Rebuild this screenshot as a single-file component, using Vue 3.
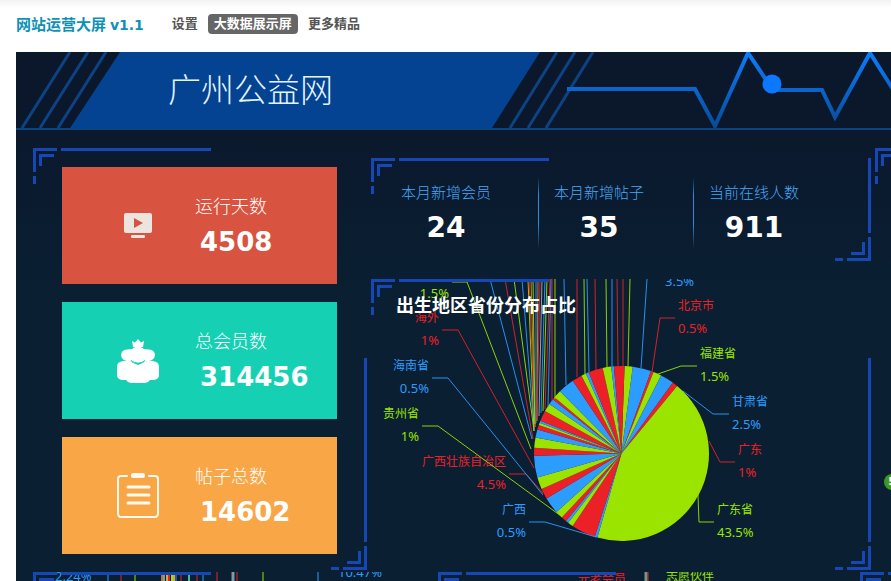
<template>
  <div class="page">
    <nav class="topbar">
      <a class="brand" href="#">网站运营大屏 <span class="brand_version">v1.1</span></a>
      <a v-for="item in menu" :key="item" href="#" :class="['menu_item', item === current ? 'menu_item_active' : '']">{{ item }}</a>
    </nav>

    <svg class="defs" aria-hidden="true">
      <defs>
        <g id="frame-start">
          <path d="M1.5 24V1.5H24M7.5 18V7.5H21M28 1.5H178M1.5 28V36" />
        </g>
        <g id="frame-end">
          <path d="M34.5 188V210.500H12M28.500 193V204.500H16M34.500 0V184M8 210.500H0" />
        </g>
        <linearGradient id="pulse" x1="0" y1="0" x2="0" y2="78" gradientUnits="userSpaceOnUse">
          <stop offset="0" stop-color="#0b7dff" />
          <stop offset="1" stop-color="#084a93" />
        </linearGradient>
      </defs>
    </svg>

    <main class="screen">
      <header class="banner">
        <svg class="banner_bg" viewBox="0 0 875 76" preserveAspectRatio="xMinYMin slice" aria-hidden="true">
          <path class="banner_shape" d="M104 0H524L476 76H54Z" />
          <path class="banner_stripe" d="M54 0L6 76M72 0L24 76M90 0L42 76M541 0L494 76M559 0L512 76M577 0L530 76" />
          <path class="banner_pulse" d="M551 37H679L699 74L732 1L757 38H806L819 65L854 1L880 42" />
          <circle cx="756" cy="32" r="9.500" fill="#0b78ff" />
        </svg>
        <h1 class="banner_title">广州公益网</h1>
      </header>

      <div class="row row_top">
        <section class="panel cards">
          <svg class="frame_start"><use href="#frame-start" /></svg>
          <svg class="frame_end"><use href="#frame-end" /></svg>

          <div class="card card_red">
            <svg class="card_icon" viewBox="0 0 46 46">
              <rect x="9" y="10" width="28" height="20" rx="2" fill="#ece4de" />
              <path d="M19 15L28 20L19 25Z" fill="#d6533f" />
              <rect x="16" y="32" width="14" height="3" rx="1" fill="#ece4de" />
            </svg>
            <div>
              <div class="card_label">运行天数</div>
              <div class="card_value">4508</div>
            </div>
          </div>
          <div class="card card_teal">
            <svg class="card_icon" viewBox="0 0 46 46" fill="#fff">
              <path d="M17 3L20 4.500L23 1L26 4.500L29 3L28 9H18Z" />
              <path d="M17 11Q19 8.500 23 8.500Q27 8.500 29 11Q31 11 34 11.500Q40 12 40 17.500Q39 22 34 23L23 25L12 23Q7 22 6 17.500Q6 12 12 11.500Q15 11 17 11Z" />
              <path d="M5 24Q9 22 14 23L23 27L32 23Q37 22 41 24Q44 25 44 29V38Q43 41.500 39 42H35Q33 45 30 45H16Q13 45 11 42H7Q3 41.500 2 38V29Q2 25 5 24Z" />
              <path d="M16 22.500Q23 28 30 22.500" fill="none" stroke="#16d0b4" stroke-width="1" />
            </svg>
            <div>
              <div class="card_label">总会员数</div>
              <div class="card_value">314456</div>
            </div>
          </div>
          <div class="card card_orange">
            <svg class="card_icon" viewBox="0 0 46 46" fill="none" stroke="#fffaf0" stroke-width="2" stroke-linecap="round">
              <path d="M12 3H6Q3 3 3 6V40Q3 44 6 44H40Q43 44 43 40V6Q43 3 40 3H34" />
              <path d="M13 14H34M13 22H34M13 30H34" stroke-width="3" />
              <rect x="17" y="1" width="12" height="3" rx="1" fill="#fffaf0" />
            </svg>
            <div>
              <div class="card_label">帖子总数</div>
              <div class="card_value">14602</div>
            </div>
          </div>
        </section>

        <div class="center">
          <section class="panel stats">
            <svg class="frame_start"><use href="#frame-start" /></svg>
            <svg class="frame_end"><use href="#frame-end" /></svg>
            <div class="stat" v-for="stat in stats" :key="stat.label">
              <div class="stat_box">
                <div class="stat_label">{{ stat.label }}</div>
                <div class="stat_value">{{ stat.value }}</div>
              </div>
            </div>
          </section>

          <section class="panel region">
            <svg class="frame_start"><use href="#frame-start" /></svg>
            <svg class="frame_end"><use href="#frame-end" /></svg>
            <h2 class="region_title">出生地区省份分布占比</h2>
            <svg class="region_chart" viewBox="0 0 500 291">
              <path v-for="(slice, i) in slices" :key="'s' + i" :d="slice.d" :fill="slice.color" />
              <path v-for="(line, i) in rays" :key="'r' + i" class="leader" :d="line.d" :stroke="line.color" />
              <g v-for="label in labels" :key="label.line">
                <path class="leader" :d="label.line" :stroke="label.color" />
                <text v-if="label.name" class="name" :x="label.x" :y="label.y" :text-anchor="label.anchor" :fill="label.color">{{ label.name }}</text>
                <text class="percent" :x="label.x" :y="label.y + 24" :text-anchor="label.anchor" :fill="label.color">{{ label.percent }}</text>
              </g>
            </svg>
          </section>
        </div>

        <section class="panel side">
          <svg class="frame_start"><use href="#frame-start" /></svg>
        </section>
      </div>

      <div class="row row_bottom">
        <section class="panel">
          <svg class="frame_start"><use href="#frame-start" /></svg>
          <svg class="bottom_chart">
            <path v-for="line in bottomRays" :key="line.x" :d="`M${line.x} 0V120`" :stroke="line.color" :stroke-width="line.width || 1" />
            <text class="percent" x="22" y="4" :fill="BLUE">2.24%</text>
            <text class="percent" x="305" y="0" :fill="BLUE">10.47%</text>
          </svg>
        </section>
        <section class="panel">
          <svg class="frame_start"><use href="#frame-start" /></svg>
          <svg class="bottom_chart">
            <path d="M208 0V120" stroke="#6f9a86" stroke-width="3" />
            <path d="M210 0V120" :stroke="RED" />
            <text class="name" x="140" y="5" :fill="RED">元老会员</text>
            <text class="name" x="228" y="3" :fill="GREEN">志愿伙伴</text>
          </svg>
        </section>
        <section class="panel">
          <svg class="frame_start"><use href="#frame-start" /></svg>
        </section>
      </div>
    </main>

    <span class="badge">5</span>
  </div>
</template>

<script setup>

import {ref} from "vue";

const GREEN = '#9be400'
const BLUE = '#2d9cff'
const RED = '#eb2127'

const menu = ['设置', '大数据展示屏', '更多精品']
const current = ref('大数据展示屏')

const stats = [
  {label: '本月新增会员', value: 24},
  {label: '本月新增帖子', value: 35},
  {label: '当前在线人数', value: 911}
]

// end angle of each slice, clockwise from the top
const START = 2
const angles = [
  [7.4, GREEN], [19.7, BLUE], [21.5, RED], [26.9, GREEN], [35.9, BLUE], [39.5, RED],
  [196, GREEN], [197.8, BLUE], [214, RED], [217.6, GREEN], [219.4, BLUE], [223, RED],
  [228, GREEN], [239, BLUE], [246, RED], [254, GREEN], [268.5, BLUE], [273.7, RED],
  [280.6, GREEN], [286, BLUE], [289, RED], [290.6, GREEN], [292, BLUE], [299, RED],
  [304.5, GREEN], [308.3, BLUE], [310, RED], [315.3, GREEN], [326.2, BLUE], [332.8, RED],
  [336, GREEN], [338, BLUE], [347.6, RED], [353.2, GREEN], [355, BLUE], [362, RED]
]

const point = (angle) => {
  const a = angle * Math.PI / 180
  return (250.5 + 87.5 * Math.sin(a)).toFixed(2) + ' ' + (174.5 - 87.5 * Math.cos(a)).toFixed(2)
}

const slices = angles.map(([end, color], i) => {
  const from = i === 0 ? START : angles[i - 1][0]
  const large = end - from > 180 ? 1 : 0
  return {color, d: `M250.5 174.5L${point(from)}A87.5 87.5 0 ${large} 1 ${point(end)}Z`}
})

// leader lines whose labels are above the visible part: top x, end x, end y
const rays = [
  [119, 161, 160, BLUE], [134, 162, 160, RED], [143, 163, 152, GREEN], [151, 163, 150, BLUE],
  [157, 163, 152, GREEN], [158, 164, 148, RED], [160, 164, 148, '#e08a30'], [162, 164, 145, GREEN],
  [165, 165, 144, BLUE], [167, 166, 142, '#e08a30'], [169, 166, 140, RED], [171, 168, 137, '#8fb7c4'],
  [174, 170, 134, BLUE], [176, 172, 132, GREEN], [179, 174, 130, RED], [180, 177, 128, BLUE],
  [184, 184, 120, GREEN], [181, 181, 122, RED], [193, 195, 106, BLUE], [206, 206, 98, RED],
  [213, 214, 95, GREEN], [216, 218, 93, BLUE], [224, 225, 91, RED], [235, 236, 88, GREEN],
  [241, 241, 88, BLUE], [246, 247, 87, RED], [252, 252, 87, RED], [259, 257, 87, GREEN]
].map(([x, endX, endY, color]) => ({color, d: `M${x} 0L${endX} ${endY}`}))

const labels = [
  {percent: '3.5%', x: 294, y: -22, color: BLUE, line: 'M276 0L270 89'},
  {name: '北京市', percent: '0.5%', x: 307, y: 25, color: RED, line: 'M281 93L289 39H304'},
  {name: '福建省', percent: '1.5%', x: 329, y: 73, color: GREEN, line: 'M287 95L310 87H326'},
  {name: '甘肃省', percent: '2.5%', x: 361, y: 121, color: BLUE, line: 'M312 112L342 135H358'},
  {name: '广东', percent: '1%', x: 367, y: 169, color: RED, line: 'M338 162L349 183H364'},
  {name: '广东省', percent: '43.5%', x: 346, y: 229, color: GREEN, line: 'M327 216L328 243H343'},
  {name: '广西', percent: '0.5%', x: 155, y: 229, anchor: 'end', color: BLUE, line: 'M158 243H174L225 258'},
  {name: '广西壮族自治区', percent: '4.5%', x: 135, y: 181, anchor: 'end', color: RED, line: 'M138 195H155L172 214'},
  {name: '贵州省', percent: '1%', x: 48, y: 133, anchor: 'end', color: GREEN, line: 'M51 147H67L190 237'},
  {name: '海南省', percent: '0.5%', x: 58, y: 85, anchor: 'end', color: BLUE, line: 'M61 99H77L172 216'},
  {name: '海外', percent: '1%', x: 68, y: 37, anchor: 'end', color: RED, line: 'M71 51H87L163 189'},
  {percent: '1.5%', x: 78, y: -10, anchor: 'end', color: GREEN, line: 'M81 3H96L160 170'}
]

const bottomRays = [
  {x: 75, color: BLUE}, {x: 88, color: RED}, {x: 102, color: GREEN},
  {x: 129, color: '#b5754a', width: 2}, {x: 131, color: '#7ea08c', width: 2}, {x: 134, color: '#c9b04a', width: 2},
  {x: 136, color: RED, width: 2}, {x: 139, color: GREEN, width: 2}, {x: 141, color: '#e0a040', width: 2},
  {x: 143, color: BLUE}, {x: 148, color: RED}, {x: 156, color: '#52b89a', width: 2}, {x: 164, color: RED},
  {x: 170, color: BLUE}, {x: 184, color: RED}, {x: 200, color: '#7f9aa0', width: 3}, {x: 204, color: RED},
  {x: 230, color: GREEN}, {x: 285, color: BLUE}
]
</script>

<style>
body {
  margin: 0;
  overflow: hidden;
  background: #ffffff;
}
</style>

<style scoped>
.page {
  height: 100vh;
  overflow: hidden;
  display: flex;
  flex-direction: column;
  position: relative;
  font-family: "DejaVu Sans", "Noto Sans CJK SC", sans-serif;
  background: linear-gradient(#f2f2f2, #ffffff 8px);
}

.defs {
  position: absolute;
  width: 0;
  height: 0;
}

#frame-start,
#frame-end {
  fill: none;
  stroke: #1548b4;
  stroke-width: 3px;
}

.topbar {
  display: flex;
  align-items: center;
  flex: 0 0 52px;
  box-sizing: border-box;
  padding: 0 16px 4px;
  gap: 4px;
  white-space: nowrap;
}

.brand {
  margin-right: 18px;
  font-size: 15px;
  font-weight: bold;
  line-height: 20px;
  font-family: "Noto Sans", "Noto Sans CJK SC", sans-serif;
  color: #0f90b6;
  text-decoration: none;
}

.brand_version {
  font-size: 14px;
  font-family: "DejaVu Sans", sans-serif;
}

.menu_item {
  padding: 0 6px;
  border-radius: 4px;
  font-size: 13px;
  font-weight: bold;
  line-height: 20px;
  color: #555555;
  text-decoration: none;
}

.menu_item_active {
  color: #ffffff;
  background: #666666;
}

.screen {
  flex: 1 0 auto;
  margin-left: 16px;
  background: linear-gradient(#0b182b, #0b192d 90px, #0a1f32 240px);
}

.banner {
  position: relative;
  height: 76px;
  border-bottom: 2px solid #0b4482;
  background: #0b182b;
}

.banner_bg {
  position: absolute;
  width: 100%;
  height: 100%;
}

.banner_shape {
  fill: #044292;
}

.banner_stripe {
  fill: none;
  stroke: #0d4284;
  stroke-width: 3px;
}

.banner_pulse {
  fill: none;
  stroke: url(#pulse);
  stroke-width: 4px;
}

.banner_title {
  position: relative;
  margin: 0;
  padding-left: 152px;
  font-size: 33px;
  font-weight: 300;
  line-height: 72px;
  font-family: "Noto Sans CJK SC", sans-serif;
  color: #e2f6ff;
}

.row {
  display: grid;
  column-gap: 4px;
  padding-left: 17px;
}

.row_top {
  grid-template-columns: 334fr 500fr 16fr;
  padding-top: 18px;
}

.row_bottom {
  grid-template-columns: 401fr 418fr 31fr;
  grid-auto-rows: 200px;
  padding-top: 2px;
}

.panel {
  position: relative;
  overflow: hidden;
}

.frame_start {
  position: absolute;
  top: 0;
  left: 0;
  width: 178px;
  height: 36px;
}

.frame_end {
  position: absolute;
  right: 0;
  bottom: 0;
  width: 36px;
  height: 212px;
}

.cards {
  display: flex;
  flex-direction: column;
  gap: 18px;
  padding: 19px 30px 16px 29px;
}

.card {
  display: flex;
  align-items: center;
  gap: 34px;
  height: 117px;
  padding-left: 53px;
  color: #ffffff;
}

.card_red {
  background: #d85340;
}

.card_teal {
  background: #16d0b4;
}

.card_orange {
  background: #f9a647;
}

.card_icon {
  width: 46px;
  height: 46px;
}

.card_label {
  font-size: 18px;
  font-weight: 300;
  line-height: 32px;
  font-family: "Noto Sans CJK SC", sans-serif;
}

.card_value {
  padding-left: 5px;
  font-size: 26px;
  font-weight: bold;
  line-height: 42px;
}

.center {
  display: flex;
  flex-direction: column;
  gap: 18px;
  padding-top: 10px;
}

.stats {
  display: grid;
  grid-template-columns: repeat(3, 1fr);
  padding: 19px 23px 12px 12px;
}

.stat {
  padding-left: 18px;
}

.stat + .stat {
  padding-left: 16px;
  background: linear-gradient(transparent, #2f8bd8 25%, #2f8bd8 65%, transparent) no-repeat left / 1px 100%;
}

.stat_box {
  width: fit-content;
  text-align: center;
}

.stat_label {
  font-size: 15px;
  font-weight: 300;
  line-height: 30px;
  font-family: "Noto Sans CJK SC", sans-serif;
  color: #48a6f5;
}

.stat_value {
  font-size: 28px;
  font-weight: bold;
  line-height: 42px;
  color: #ffffff;
}

.region_title {
  position: absolute;
  top: 12px;
  left: 25px;
  margin: 0;
  font-size: 18px;
  font-weight: bold;
  line-height: 26px;
  font-family: "Noto Sans CJK SC", sans-serif;
  color: #ffffff;
}

.region_chart {
  display: block;
  width: 100%;
}

.leader {
  fill: none;
  stroke-width: 1px;
  opacity: 0.9;
}

.name {
  font-size: 12px;
  font-family: "Noto Sans CJK SC", sans-serif;
  dominant-baseline: central;
}

.percent {
  font-size: 13px;
  font-family: "Noto Sans", sans-serif;
  dominant-baseline: central;
}

.bottom_chart {
  display: block;
  width: 100%;
  height: 120px;
}

.badge {
  position: absolute;
  top: 474px;
  right: -9px;
  width: 16px;
  height: 16px;
  border-radius: 50%;
  font-size: 11px;
  font-weight: bold;
  line-height: 16px;
  text-align: center;
  color: #ffffff;
  background: #3c9a1e;
}
</style>
